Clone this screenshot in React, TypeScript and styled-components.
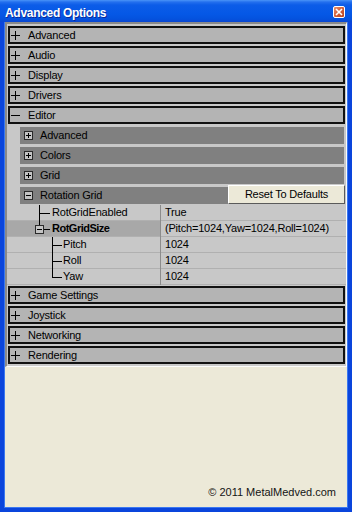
import React from 'react';
import styled, { createGlobalStyle } from 'styled-components';

const GlobalStyle = createGlobalStyle`
    * {
        box-sizing: border-box;
    }
    html,
    body {
        margin: 0;
        padding: 0;
    }
    body {
        width: 352px;
        height: 512px;
        overflow: hidden;
        background: #ece9d8;
        font-family: 'Liberation Sans', Arial, sans-serif;
        font-size: 11px;
        letter-spacing: -0.2px;
        color: #000;
    }
`;

const Window = styled.div`
    width: 352px;
    height: 512px;
    display: flex;
    flex-direction: column;
`;

const TitleBar = styled.div`
    height: 22px;
    flex: none;
    display: flex;
    justify-content: space-between;
    align-items: flex-start;
    background: linear-gradient(
        to bottom,
        #4a94f8 0px,
        #2470ee 2px,
        #0c5ce8 5px,
        #0558e6 14px,
        #0452de 19px,
        #0a46d2 22px
    );
`;

const TitleText = styled.div`
    padding: 6px 0 0 5px;
    line-height: 14px;
    font-size: 12px;
    font-weight: bold;
    letter-spacing: -0.3px;
    color: #fff;
    text-shadow: 1px 1px 0 #0a2a9a;
`;

const CloseButton = styled.div`
    width: 12px;
    height: 12px;
    margin: 6px 7px 0 0;
    border: 1px solid #fff;
    border-radius: 2px;
    background: linear-gradient(135deg, #e8906c 0%, #d2603a 50%, #b8421c 100%);
    display: flex;
    align-items: center;
    justify-content: center;
`;

const Frame = styled.div`
    flex: 1;
    display: flex;
    flex-direction: column;
    border: solid #0a45dc;
    border-width: 0 4px 4px;
    box-shadow: inset 1px 0 0 #3a78f0, inset -1px 0 0 #3a78f0, inset 0 -1px 0 #3a78f0;
    background: #ece9d8;
`;

const Panel = styled.div`
    margin: 0 1px;
    padding-bottom: 2px;
    background: #c8c8c8;
    border-top: 2px solid #8a8a8a;
    border-left: 2px solid #8a8a8a;
    border-right: 1px solid #fbfbfb;
    border-bottom: 1px solid #fbfbfb;
`;

const CategoryRow = styled.div`
    height: 18px;
    margin: 2px 1px 0;
    padding-left: 1px;
    display: flex;
    align-items: center;
    background: #b4b4b4;
    border: 2px solid #111;
    line-height: 14px;
`;

const CategoryLabel = styled.span`
    margin-left: 8px;
`;

const GroupRow = styled.div`
    height: 17px;
    margin: 3px 2px 0 13px;
    padding-left: 4px;
    display: flex;
    align-items: center;
    background: #808080;
    line-height: 17px;
`;

const GroupLabel = styled.span`
    margin-left: 7px;
`;

const ResetButton = styled.div`
    align-self: flex-start;
    width: 117px;
    height: 19px;
    margin: -2px -1px 0 auto;
    display: flex;
    align-items: center;
    justify-content: center;
    background: #ece9d8;
    border-top: 1px solid #fff;
    border-left: 1px solid #fff;
    border-right: 1px solid #5a5a5a;
    border-bottom: 1px solid #5a5a5a;
    line-height: 15px;
`;

const PropGrid = styled.div`
    margin: 1px 0 -1px;
`;

const PropRow = styled.div`
    height: 16px;
    display: flex;
`;

const NameCell = styled.div<{ $selected?: boolean }>`
    width: 154px;
    flex: none;
    display: flex;
    align-items: flex-start;
    background: ${(p) => (p.$selected ? '#a8a8a8' : 'transparent')};
    border-right: 1px solid #8c8c8c;
    box-shadow: inset 0 -1px 0 #b0b0b0;
    overflow: hidden;
`;

const NameText = styled.span<{ $bold?: boolean }>`
    line-height: 15px;
    font-weight: ${(p) => (p.$bold ? 'bold' : 'normal')};
    letter-spacing: ${(p) => (p.$bold ? '-0.5px' : '-0.2px')};
    white-space: nowrap;
`;

const ValueCell = styled.div`
    flex: 1;
    padding-left: 4px;
    line-height: 15px;
    border-bottom: 1px solid #b0b0b0;
    white-space: nowrap;
`;

const Footer = styled.div`
    margin-top: auto;
    padding: 0 12px 9px 0;
    text-align: right;
    line-height: 13px;
    letter-spacing: 0;
    color: #141414;
`;

const Sign: React.FC<{ open?: boolean }> = ({ open }) => (
    <svg width="9" height="9" viewBox="0 0 9 9" shapeRendering="crispEdges" style={{ flex: 'none' }}>
        <rect x="0" y="4" width="9" height="1" fill="#000" />
        {!open && <rect x="4" y="0" width="1" height="9" fill="#000" />}
    </svg>
);

const BoxSign: React.FC<{ open?: boolean }> = ({ open }) => (
    <svg width="9" height="9" viewBox="0 0 9 9" shapeRendering="crispEdges" style={{ flex: 'none' }}>
        <rect x="0.5" y="0.5" width="8" height="8" fill="#c4c4c4" stroke="#2a2a2a" />
        <rect x="2" y="4" width="5" height="1" fill="#000" />
        {!open && <rect x="4" y="2" width="1" height="5" fill="#000" />}
    </svg>
);

type Branch = 'root' | 'rootLast' | 'child' | 'childLast';

const Connector: React.FC<{ kind: Branch }> = ({ kind }) => {
    const width = kind === 'root' || kind === 'rootLast' ? 45 : 56;
    return (
        <svg width={width} height="16" viewBox={`0 0 ${width} 16`} shapeRendering="crispEdges" style={{ flex: 'none' }}>
            {kind === 'root' && (
                <>
                    <rect x="32" y="0" width="1" height="16" fill="#000" />
                    <rect x="32" y="8" width="11" height="1" fill="#000" />
                </>
            )}
            {kind === 'rootLast' && (
                <>
                    <rect x="32" y="0" width="1" height="4" fill="#000" />
                    <rect x="28.5" y="4.5" width="8" height="8" fill="#c4c4c4" stroke="#2a2a2a" />
                    <rect x="30" y="8" width="5" height="1" fill="#000" />
                    <rect x="37" y="8" width="6" height="1" fill="#000" />
                </>
            )}
            {(kind === 'child' || kind === 'childLast') && (
                <>
                    <rect x="45" y="0" width="1" height={kind === 'child' ? 16 : 9} fill="#000" />
                    <rect x="45" y="8" width="10" height="1" fill="#000" />
                </>
            )}
        </svg>
    );
};

const topCategories = ['Advanced', 'Audio', 'Display', 'Drivers'];
const bottomCategories = ['Game Settings', 'Joystick', 'Networking', 'Rendering'];
const editorGroups = ['Advanced', 'Colors', 'Grid'];

const properties: { name: string; value: string; kind: Branch; bold?: boolean }[] = [
    { name: 'RotGridEnabled', value: 'True', kind: 'root' },
    { name: 'RotGridSize', value: '(Pitch=1024,Yaw=1024,Roll=1024)', kind: 'rootLast', bold: true },
    { name: 'Pitch', value: '1024', kind: 'child' },
    { name: 'Roll', value: '1024', kind: 'child' },
    { name: 'Yaw', value: '1024', kind: 'childLast' },
];

const App: React.FC = () => {
    return (
        <Window>
            <GlobalStyle />
            <TitleBar>
                <TitleText>Advanced Options</TitleText>
                <CloseButton>
                    <svg width="8" height="8" viewBox="0 0 8 8">
                        <path d="M1 1 L7 7 M7 1 L1 7" stroke="#fff" strokeWidth="1.6" />
                    </svg>
                </CloseButton>
            </TitleBar>
            <Frame>
                <Panel>
                    {topCategories.map((name) => (
                        <CategoryRow key={name}>
                            <Sign />
                            <CategoryLabel>{name}</CategoryLabel>
                        </CategoryRow>
                    ))}
                    <CategoryRow>
                        <Sign open />
                        <CategoryLabel>Editor</CategoryLabel>
                    </CategoryRow>
                    {editorGroups.map((name) => (
                        <GroupRow key={name}>
                            <BoxSign />
                            <GroupLabel>{name}</GroupLabel>
                        </GroupRow>
                    ))}
                    <GroupRow>
                        <BoxSign open />
                        <GroupLabel>Rotation Grid</GroupLabel>
                        <ResetButton>Reset To Defaults</ResetButton>
                    </GroupRow>
                    <PropGrid>
                        {properties.map((p) => (
                            <PropRow key={p.name}>
                                <NameCell $selected={p.bold}>
                                    <Connector kind={p.kind} />
                                    <NameText $bold={p.bold}>{p.name}</NameText>
                                </NameCell>
                                <ValueCell>{p.value}</ValueCell>
                            </PropRow>
                        ))}
                    </PropGrid>
                    {bottomCategories.map((name) => (
                        <CategoryRow key={name}>
                            <Sign />
                            <CategoryLabel>{name}</CategoryLabel>
                        </CategoryRow>
                    ))}
                </Panel>
                <Footer>© 2011 MetalMedved.com</Footer>
            </Frame>
        </Window>
    );
};

export default App;
